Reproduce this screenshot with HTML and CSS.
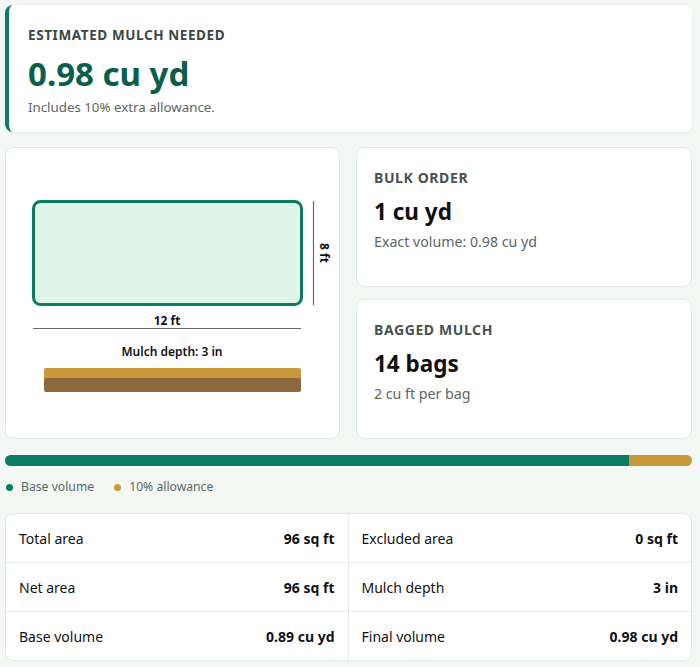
FILE: index.html
```html
<!DOCTYPE html>
<html lang="en">
<head>
    <meta charset="UTF-8">
    <meta name="viewport" content="width=device-width, initial-scale=1.0">
    <title>Mulch Calculator Result</title>
    <link rel="stylesheet" href="styles.css">
</head>
<body>

    <!-- Risultato principale -->
    <section class="hero-card">
        <div class="eyebrow">Estimated mulch needed</div>
        <div class="hero-value">0.98 cu yd</div>
        <p class="hero-note">Includes 10% extra allowance.</p>
    </section>

    <div class="middle">
        <!-- Diagramma dell'aiuola -->
        <div class="card diagram-card">
            <svg class="diagram" width="335" height="292" viewBox="0 0 335 292">
                <rect x="28.5" y="54.5" width="268" height="103" rx="7" fill="#e0f5ea" stroke="#0f7a62" stroke-width="3"/>
                <line x1="308.5" y1="54" x2="308.5" y2="158" stroke="#6b6b6b" stroke-width="1.2"/>
                <text x="315" y="106" transform="rotate(90 315 106)" class="dim-text">8 ft</text>
                <line x1="28" y1="181.5" x2="296" y2="181.5" stroke="#6b6b6b" stroke-width="1.2"/>
                <text x="162" y="178" class="dim-text">12 ft</text>
                <text x="167" y="209" class="depth-text">Mulch depth: 3 in</text>
                <rect x="39" y="221" width="257" height="12" rx="2" fill="#c9983a"/>
                <rect x="39" y="231" width="257" height="14" rx="2" fill="#8b683d"/>
            </svg>
        </div>

        <div class="side-cards">
            <div class="card info-card">
                <div class="info-label">Bulk order</div>
                <div class="info-value">1 cu yd</div>
                <div class="info-note">Exact volume: 0.98 cu yd</div>
            </div>
            <div class="card info-card">
                <div class="info-label">Bagged mulch</div>
                <div class="info-value">14 bags</div>
                <div class="info-note">2 cu ft per bag</div>
            </div>
        </div>
    </div>

    <!-- Barra volume base / margine -->
    <div class="volume-bar">
        <div class="bar-base" style="width:90.9%"></div>
        <div class="bar-extra"></div>
    </div>
    <div class="legend">
        <span class="legend-item"><span class="dot dot-base"></span>Base volume</span>
        <span class="legend-item"><span class="dot dot-extra"></span>10% allowance</span>
    </div>

    <!-- Tabella dettagli -->
    <div class="details">
        <div class="row"><span>Total area</span><strong>96 sq ft</strong></div>
        <div class="row"><span>Excluded area</span><strong>0 sq ft</strong></div>
        <div class="row"><span>Net area</span><strong>96 sq ft</strong></div>
        <div class="row"><span>Mulch depth</span><strong>3 in</strong></div>
        <div class="row"><span>Base volume</span><strong>0.89 cu yd</strong></div>
        <div class="row"><span>Final volume</span><strong>0.98 cu yd</strong></div>
    </div>

</body>
</html>
```

FILE: styles.css
```css
:root {
    --bg: #f3f8f5;
    --card: #ffffff;
    --border: #dfe8e3;
    --green: #0a7c64;
    --green-dark: #0b5e4a;
    --gold: #c9983a;
    --label: #3b4845;
    --muted: #5c6663;
    --text: #111;
}

body {
    margin: 0;
    padding: 5px 8px 5px 5px;
    background: var(--bg);
    font-family: "Noto Sans", "Open Sans", sans-serif;
    color: var(--text);
}

.card {
    background: var(--card);
    border: 1px solid var(--border);
    border-radius: 8px;
    box-sizing: border-box;
}

.hero-card {
    background: var(--card);
    border-radius: 8px;
    border-left: 4px solid var(--green);
    box-shadow: 0 1px 4px rgba(0,0,0,0.05);
    height: 127px;
    box-sizing: border-box;
    padding: 21px 20px 0 19px;
}

.eyebrow {
    font-size: 13.5px;
    font-weight: 700;
    letter-spacing: 0.6px;
    text-transform: uppercase;
    color: var(--label);
    line-height: 19px;
}

.hero-value {
    font-size: 33px;
    font-weight: 700;
    color: var(--green-dark);
    line-height: 42px;
    margin-top: 8px;
}

.hero-note {
    margin: 3px 0 0;
    font-size: 13.3px;
    color: var(--muted);
    line-height: 18px;
}

.middle {
    display: grid;
    grid-template-columns: 335px 336px;
    gap: 16px;
    margin-top: 15px;
    height: 292px;
}

.diagram-card {
    overflow: hidden;
}

.diagram {
    display: block;
    margin: -1px;
}

.dim-text {
    font-size: 12px;
    font-weight: 700;
    text-anchor: middle;
    fill: #111;
}

.depth-text {
    font-size: 12px;
    font-weight: 600;
    text-anchor: middle;
    fill: #111;
}

.side-cards {
    display: grid;
    grid-template-rows: 1fr 1fr;
    gap: 12px;
}

.info-card {
    padding: 21px 17px 0;
}

.info-label {
    font-size: 14px;
    font-weight: 700;
    letter-spacing: 0.6px;
    text-transform: uppercase;
    color: #47524f;
    line-height: 18px;
}

.info-value {
    font-size: 22.5px;
    font-weight: 700;
    line-height: 30px;
    margin-top: 10px;
}

.info-note {
    font-size: 14.2px;
    color: var(--muted);
    line-height: 20px;
    margin-top: 5px;
}

.volume-bar {
    display: flex;
    height: 11px;
    border-radius: 6px;
    overflow: hidden;
    margin-top: 16px;
}

.bar-base {
    background: var(--green);
}

.bar-extra {
    flex: 1;
    background: var(--gold);
}

.legend {
    display: flex;
    gap: 19px;
    margin-top: 13px;
    font-size: 12.2px;
    color: var(--muted);
    line-height: 16px;
}

.legend-item {
    display: flex;
    align-items: center;
    gap: 8px;
}

.dot {
    width: 7px;
    height: 7px;
    border-radius: 50%;
    margin-left: 1px;
}

.dot-base { background: var(--green); }
.dot-extra { background: var(--gold); }

.details {
    display: grid;
    grid-template-columns: 1fr 1fr;
    margin-top: 18px;
    background: var(--card);
    border: 1px solid var(--border);
    border-radius: 8px;
    overflow: hidden;
}

.row {
    display: flex;
    justify-content: space-between;
    align-items: center;
    height: 48px;
    padding: 0 13px;
    font-size: 14px;
    border-bottom: 1px solid #e6ece9;
}

.row:nth-child(odd) {
    border-right: 1px solid #e6ece9;
}

.row:nth-last-child(-n+2) {
    border-bottom: none;
}

.row strong {
    font-weight: 700;
}
```
